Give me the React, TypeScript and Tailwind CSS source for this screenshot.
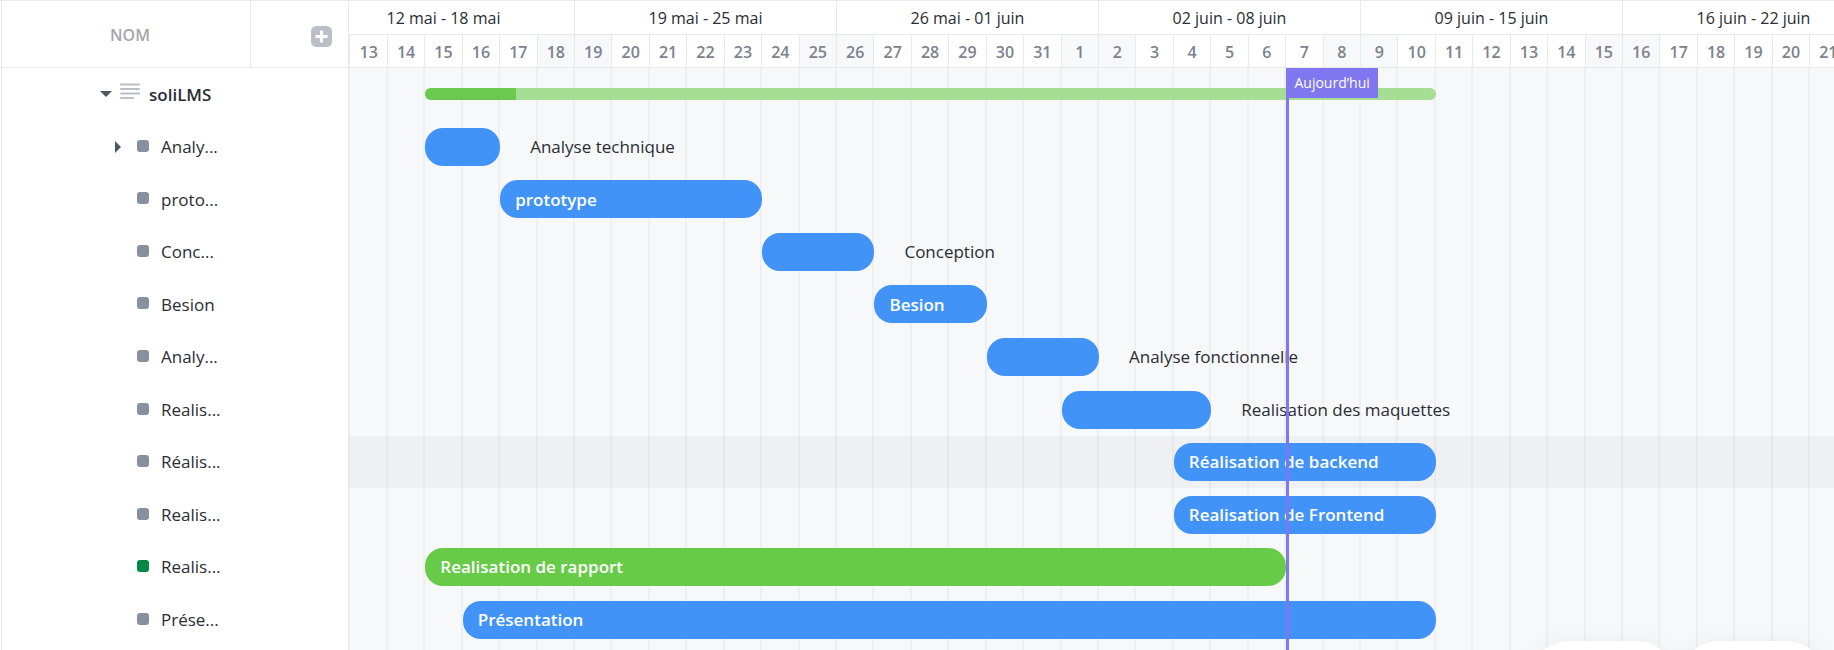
import React from "react";

type Task = {
  name: string;
  label: string;
  start: number;
  days: number;
  outside?: boolean;
  done?: boolean;
  hovered?: boolean;
  expandable?: boolean;
};

const WEEKS = [
  "12 mai - 18 mai",
  "19 mai - 25 mai",
  "26 mai - 01 juin",
  "02 juin - 08 juin",
  "09 juin - 15 juin",
  "16 juin - 22 juin",
];

const DAYS = Array.from({ length: 42 }, (_, i) => {
  const day = 12 + i;
  return { number: day > 31 ? day - 31 : day, weekend: i % 7 === 6 || i % 7 === 0 };
});

// The canvas is scrolled past its first day, and the last one lies beyond the right edge.
const FIRST_VISIBLE = 1;
const LAST_VISIBLE = 40;

const TODAY = 26;

const TASKS: Task[] = [
  { name: "Analy...", label: "Analyse technique", start: 4, days: 2, outside: true, expandable: true },
  { name: "proto...", label: "prototype", start: 6, days: 7 },
  { name: "Conc...", label: "Conception", start: 13, days: 3, outside: true },
  { name: "Besion", label: "Besion", start: 16, days: 3 },
  { name: "Analy...", label: "Analyse fonctionnelle", start: 19, days: 3, outside: true },
  { name: "Realis...", label: "Realisation des maquettes", start: 21, days: 4, outside: true },
  { name: "Réalis...", label: "Réalisation de backend", start: 24, days: 7, hovered: true },
  { name: "Realis...", label: "Realisation de Frontend", start: 24, days: 7 },
  { name: "Realis...", label: "Realisation de rapport", start: 4, days: 23, done: true },
  { name: "Prése...", label: "Présentation", start: 5, days: 26 },
];

function Sidebar() {
  return (
    <aside className="flex w-[348px] shrink-0 flex-col border-x border-[#e8e9ed] bg-white">
      <header className="flex h-[67px] border-b border-[#e8e9ed]">
        <div className="flex w-[249px] items-center justify-center border-r border-[#e8e9ed] pt-[2px] pl-2 text-base font-semibold text-[#a5a6a8]">
          NOM
        </div>
        <div className="flex flex-1 items-center justify-end pt-1 pr-4">
          <button type="button" aria-label="Ajouter une colonne" className="size-[21px]">
            <svg viewBox="0 0 21 21" className="size-full">
              <rect width="21" height="21" rx="5.5" fill="#b9bec7" />
              <path d="M10.5 4.500v12M4.500 10.500h12" stroke="#fff" strokeWidth="3.2" />
            </svg>
          </button>
        </div>
      </header>
      <ul className="grid h-[578px] grid-rows-11 text-[#292d34]">
        <li className="flex items-center pl-[98px]">
          <button type="button" aria-label="Réduire soliLMS" className="w-3">
            <svg viewBox="0 0 12 6" className="h-[6px] w-3">
              <path d="M0 0h12L6 6z" fill="#4f5762" />
            </svg>
          </button>
          <svg viewBox="0 0 20 17" className="mb-[6px] ml-2 h-[17px] w-5">
            <path d="M1 1.500h18M1 6h18M1 10.500h18M1 15h12" stroke="#b9bec7" strokeWidth="2" strokeLinecap="round" />
          </svg>
          <span className="ml-[9px] text-[17px] font-semibold">soliLMS</span>
        </li>
        {TASKS.map((task, i) => (
          <li key={i} className="flex items-center pl-[113px]">
            <span className="flex w-[22px] items-center">
              {task.expandable && (
                <button type="button" aria-label={`Développer ${task.label}`} className="h-3">
                  <svg viewBox="0 0 6 12" className="h-3 w-[6px]">
                    <path d="M0 0v12l6-6z" fill="#4f5762" />
                  </svg>
                </button>
              )}
            </span>
            <span className={`mb-[2px] size-3 rounded-[3px] ${task.done ? "bg-[#008844]" : "bg-[#87909e]"}`} />
            <span className="ml-3 text-[17px]">{task.name}</span>
          </li>
        ))}
      </ul>
    </aside>
  );
}

function TimelineHeader() {
  return (
    <header className="bg-white">
      <div className="grid h-[34px] grid-cols-6 border-b border-[#e8e9ed]">
        {WEEKS.map((week) => (
          <div key={week} className="flex items-center justify-center border-r border-[#e8e9ed] text-base font-medium text-[#292d34]">
            {week}
          </div>
        ))}
      </div>
      <div className="grid h-[33px] grid-cols-42 border-b border-[#e8e9ed]">
        {DAYS.map((day, i) => (
          <div
            key={i}
            className={`flex items-center justify-center border-r border-[#e8e9ed] pt-[2px] text-base font-semibold text-[#7c828d] ${day.weekend ? "bg-[#f7f8fa]" : ""}`}
          >
            {i >= FIRST_VISIBLE && i <= LAST_VISIBLE && day.number}
          </div>
        ))}
      </div>
    </header>
  );
}

function TaskRow({ task }: { task: Task }) {
  const end = task.start + task.days;
  return (
    <div className={`grid grid-cols-42 items-center ${task.hovered ? "bg-black/3" : ""}`}>
      <div
        className={`flex h-[38px] items-center rounded-[18px] px-[15px] text-[17px] font-semibold whitespace-nowrap text-white ${task.done ? "bg-[#67cb48]" : "bg-[#4193f7]"}`}
        style={{ gridColumn: `${task.start} / ${end}`, gridRow: 1 }}
      >
        {!task.outside && task.label}
      </div>
      {task.outside && (
        <span
          className="pl-[30px] text-[17px] font-medium whitespace-nowrap text-[#292d34]"
          style={{ gridColumn: `${end} / span 10`, gridRow: 1 }}
        >
          {task.label}
        </span>
      )}
    </div>
  );
}

function Timeline() {
  return (
    <main className="flex min-w-0 flex-1 overflow-hidden bg-[#f7f8fa]">
      <div className="-ml-9 flex w-[1572px] shrink-0 flex-col">
        <TimelineHeader />
        <div className="grid flex-1 grid-cols-1 grid-rows-1">
          <div className="col-start-1 row-start-1 grid grid-cols-42">
            {DAYS.map((_, i) => (
              <div key={i} className="border-r-2 border-[#eeeff1]" />
            ))}
          </div>
          <div className="col-start-1 row-start-1 grid h-[578px] grid-rows-11">
            <div className="grid grid-cols-42 items-center">
              <div className="col-start-4 col-end-31 h-3 overflow-hidden rounded-full bg-[#a6df94]">
                <div className="h-full w-[9%] bg-[#6bc950]" />
              </div>
            </div>
            {TASKS.map((task, i) => (
              <TaskRow key={i} task={task} />
            ))}
          </div>
          <div className="pointer-events-none z-10 col-start-1 row-start-1 grid grid-cols-42">
            <div
              className="border-l-3 border-[#7f76f0]"
              style={{ gridColumn: `${TODAY + 1} / span 4` }}
            >
              <span className="-ml-[3px] flex h-[30px] w-[92px] items-center justify-center bg-[#7f76f0] text-sm text-white">
                Aujourd’hui
              </span>
            </div>
          </div>
        </div>
      </div>
    </main>
  );
}

export default function App() {
  return (
    <div className="relative flex h-screen overflow-hidden border-t border-[#e8e9ed] bg-white pl-px font-['Open_Sans','Noto_Sans',sans-serif]">
      <Sidebar />
      <Timeline />
      <div className="absolute right-2 -bottom-[71px] z-20 flex gap-[3px]">
        <div className="h-20 w-[147px] rounded-full bg-white shadow-[0_0_24px_rgba(0,0,0,0.05)]" />
        <div className="h-20 w-[147px] rounded-full bg-white shadow-[0_0_24px_rgba(0,0,0,0.05)]" />
      </div>
    </div>
  );
}
